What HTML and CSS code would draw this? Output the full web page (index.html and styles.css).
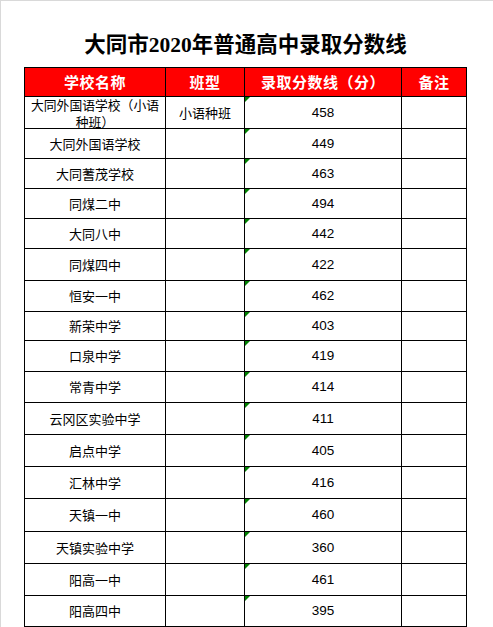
FILE: index.html
```html
<!DOCTYPE html>
<html lang="zh">
<head>
<meta charset="utf-8">
<title>大同市2020年普通高中录取分数线</title>
<link rel="stylesheet" href="styles.css">
</head>
<body>
<div class="page">
  <div class="title-row"><h1 class="title">大同市2020年普通高中录取分数线</h1></div>
  <div class="sheet">
    <div class="cell head">学校名称</div><div class="cell head">班型</div><div class="cell head">录取分数线（分）</div><div class="cell head">备注</div>
    <div class="cell name stack"><span class="line">大同外国语学校（小语</span><span class="line">种班）</span></div><div class="cell">小语种班</div><div class="cell score">458</div><div class="cell"></div>
    <div class="cell name">大同外国语学校</div><div class="cell"></div><div class="cell score">449</div><div class="cell"></div>
    <div class="cell name">大同蓍茂学校</div><div class="cell"></div><div class="cell score">463</div><div class="cell"></div>
    <div class="cell name">同煤二中</div><div class="cell"></div><div class="cell score">494</div><div class="cell"></div>
    <div class="cell name">大同八中</div><div class="cell"></div><div class="cell score">442</div><div class="cell"></div>
    <div class="cell name">同煤四中</div><div class="cell"></div><div class="cell score">422</div><div class="cell"></div>
    <div class="cell name">恒安一中</div><div class="cell"></div><div class="cell score">462</div><div class="cell"></div>
    <div class="cell name">新荣中学</div><div class="cell"></div><div class="cell score">403</div><div class="cell"></div>
    <div class="cell name">口泉中学</div><div class="cell"></div><div class="cell score">419</div><div class="cell"></div>
    <div class="cell name">常青中学</div><div class="cell"></div><div class="cell score">414</div><div class="cell"></div>
    <div class="cell name">云冈区实验中学</div><div class="cell"></div><div class="cell score">411</div><div class="cell"></div>
    <div class="cell name">启点中学</div><div class="cell"></div><div class="cell score">405</div><div class="cell"></div>
    <div class="cell name">汇林中学</div><div class="cell"></div><div class="cell score">416</div><div class="cell"></div>
    <div class="cell name">天镇一中</div><div class="cell"></div><div class="cell score">460</div><div class="cell"></div>
    <div class="cell name">天镇实验中学</div><div class="cell"></div><div class="cell score">360</div><div class="cell"></div>
    <div class="cell name">阳高一中</div><div class="cell"></div><div class="cell score">461</div><div class="cell"></div>
    <div class="cell name">阳高四中</div><div class="cell"></div><div class="cell score">395</div><div class="cell"></div>
  </div>
</div>
</body>
</html>
```
FILE: styles.css
```css
html, body {
  margin: 0;
  padding: 0;
  background: #ffffff;
}

body {
  font-family: "Noto Sans CJK SC", "Noto Sans", sans-serif;
  color: #000000;
}

.page {
  width: 492px;
  height: 626px;
  border-top: 1px solid #d9d9d9;
  border-left: 1px solid #d9d9d9;
  overflow: hidden;
}

.title-row {
  height: 66px;
  width: 443px;
  margin-left: 23px;
  box-sizing: border-box;
  padding-top: 32px;
}

.title {
  margin: 0;
  text-align: center;
  font-family: "Liberation Serif", "Noto Sans CJK SC", serif;
  font-weight: bold;
  font-size: 21.5px;
  line-height: 24px;
}

.sheet {
  margin-left: 23px;
  width: 443px;
  box-sizing: border-box;
  display: grid;
  grid-template-columns: 140px 78px 156px 64px;
  grid-template-rows: 28px 31px 29px 29px 29px 29px 31px 30px 28px 30px 30px 31px 31px 31px 32px 31px 31px 30px;
  gap: 1px;
  padding: 1px;
  background: #000000;
}

.cell {
  background: #ffffff;
  display: flex;
  align-items: center;
  justify-content: center;
  text-align: center;
  font-size: 13px;
  line-height: 16px;
  padding: 0 3px;
  position: relative;
}

.stack {
  flex-direction: column;
  padding: 0;
}

.line {
  display: block;
  white-space: nowrap;
  text-align: center;
  line-height: 17px;
  font-size: 12.8px;
}

.head {
  background: #ff0000;
  color: #ffffff;
  font-weight: bold;
  font-size: 15px;
  letter-spacing: 0.5px;
}

.score {
  font-family: "Liberation Sans", sans-serif;
  font-size: 13.5px;
}

.score::before {
  content: "";
  position: absolute;
  top: 0;
  left: 0;
  width: 0;
  height: 0;
  border-top: 5px solid #008000;
  border-right: 5px solid transparent;
}
```
